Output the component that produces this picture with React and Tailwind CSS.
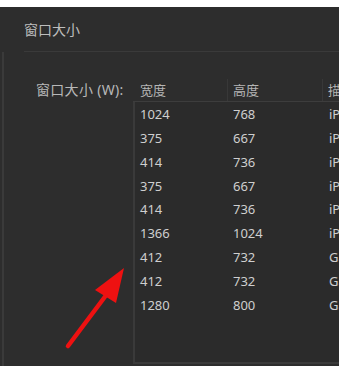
import React from "react";

const rows = [
  ["1024", "768", "iPad"],
  ["375", "667", "iPhone"],
  ["414", "736", "iPhone"],
  ["375", "667", "iPhone"],
  ["414", "736", "iPhone"],
  ["1366", "1024", "iPad"],
  ["412", "732", "Galaxy"],
  ["412", "732", "Galaxy"],
  ["1280", "800", "Galaxy"],
];

export default function App() {
  return (
    <div
      className="relative flex h-[366px] w-[339px] flex-col overflow-hidden bg-white text-[13px] text-[#cfcfcf]"
      style={{ fontFamily: '"Noto Sans", "Noto Sans CJK SC", sans-serif' }}
    >
      <div className="h-[7px] shrink-0 bg-white" />
      <div className="flex flex-1 flex-col bg-[#2d2d2d]">
        <div className="flex h-[44px] items-center pl-[24px] text-[14px] text-[#bdbdbd]">窗口大小</div>
        <div className="ml-[24px] h-px bg-[#3a3a3a]" />
        <div className="ml-[2px] flex flex-1 border-l-2 border-[#3a3a3a] pt-[27px]">
          <div className="w-[129px] shrink-0 pl-[32px] text-[14px] tracking-[0.3px] text-[#b8b8b8]">窗口大小 (W):</div>
          <div className="flex flex-1 flex-col">
            <div className="flex h-[23px] border-b border-[#3d3d3d] text-[#b5b5b5]">
              <div className="w-[95px] border-r border-[#383838] pl-[7px] leading-[22px]">宽度</div>
              <div className="w-[95px] border-r border-[#383838] pl-[5px] leading-[22px]">高度</div>
              <div className="flex-1 pl-[5px] leading-[22px]">描述</div>
            </div>
            <div className="mb-[2px] flex-1 border-b-2 border-l-2 border-[#3a3a3a] bg-[#2b2b2b] pt-[1px]">
              {rows.map((r, i) => (
                <div key={i} className="flex h-[23.8px] items-center">
                  <div className="w-[95px] pl-[5px]">{r[0]}</div>
                  <div className="w-[95px] pl-[3px]">{r[1]}</div>
                  <div className="flex-1 whitespace-nowrap pl-[4px]">{r[2]}</div>
                </div>
              ))}
            </div>
          </div>
        </div>
      </div>
      <svg className="absolute left-0 top-0" width="339" height="366" viewBox="0 0 339 366">
        <line x1="68" y1="346" x2="110" y2="290" stroke="#ee1111" strokeWidth="4.5" strokeLinecap="round" />
        <polygon points="124,268 95,290 116,303" fill="#ee1111" />
      </svg>
    </div>
  );
}
